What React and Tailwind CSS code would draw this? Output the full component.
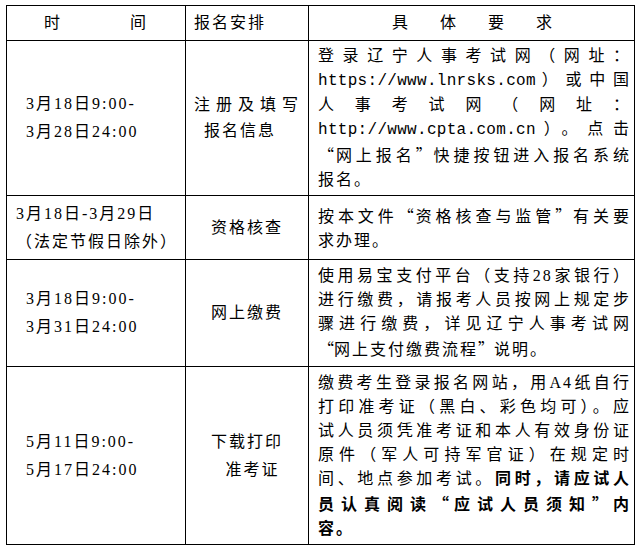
// Registration schedule table (时间 / 报名安排 / 具体要求)
const serif = "font-['Liberation_Serif','Noto_Sans_CJK_SC',serif]";

function Q({ close = false }) {
  return (
    <span
      className={
        "inline-block w-[16px] font-['Noto_Sans_CJK_SC',sans-serif] " +
        (close ? "text-left" : "text-right")
      }
    >
      {close ? "”" : "“"}
    </span>
  );
}

function Url({ children }) {
  return <span className="font-['Liberation_Mono',monospace] tracking-[0.3px]">{children}</span>;
}

// one justified line of the requirement column
function J({ children }) {
  return <div className="text-justify [text-align-last:justify]">{children}</div>;
}

function Cell({ children, className = "" }) {
  return <div className={"flex items-center bg-white " + className}>{children}</div>;
}

function TimeCell({ lines }) {
  return (
    <Cell className="pl-[19px]">
      <div className="leading-[28px]">
        {lines.map((l) => (
          <div key={l}>{l}</div>
        ))}
      </div>
    </Cell>
  );
}

function Req({ children }) {
  return (
    <Cell className="pl-[9px] pr-[3px]">
      <div className="w-full leading-[24px]">{children}</div>
    </Cell>
  );
}

export default function App() {
  return (
    <div className={"min-h-screen bg-white pl-[6px] pt-[5px] text-[16px] tracking-[2px] text-black " + serif}>
      <div className="grid w-[629px] grid-cols-[178px_122px_325px] grid-rows-[34px_154px_63px_106px_177px] gap-px bg-black p-px">
        {/* header */}
        <Cell className="gap-[68px] pl-[37px]">
          <span>时</span>
          <span>间</span>
        </Cell>
        <Cell className="pl-[8px]">报名安排</Cell>
        <Cell className="gap-[32px] pl-[83px] tracking-normal">
          <span>具</span>
          <span>体</span>
          <span>要</span>
          <span>求</span>
        </Cell>

        {/* row 1 */}
        <TimeCell lines={["3月18日9:00-", "3月28日24:00"]} />
        <Cell className="px-[8px]">
          <div className="w-full leading-[26px]">
            <J>注册及填写</J>
            <div className="pl-[10px]">报名信息</div>
          </div>
        </Cell>
        <Req>
          <J>登录辽宁人事考试网（网址：</J>
          <J>
            <Url>https://www.lnrsks.com</Url>）或中国
          </J>
          <J>人事考试网（网址：</J>
          <J>
            <Url>http://www.cpta.com.cn</Url>）。点击
          </J>
          <J>
            <Q />网上报名<Q close />快捷按钮进入报名系统
          </J>
          <div>报名。</div>
        </Req>

        {/* row 2 */}
        <Cell className="pl-[9px]">
          <div className="leading-[28px]">
            <div>3月18日-3月29日</div>
            <div>（法定节假日除外）</div>
          </div>
        </Cell>
        <Cell className="justify-center">资格核查</Cell>
        <Req>
          <J>
            按本文件<Q />资格核查与监管<Q close />有关要
          </J>
          <div>求办理。</div>
        </Req>

        {/* row 3 */}
        <TimeCell lines={["3月18日9:00-", "3月31日24:00"]} />
        <Cell className="justify-center">网上缴费</Cell>
        <Req>
          <J>使用易宝支付平台（支持28家银行）</J>
          <J>进行缴费，请报考人员按网上规定步</J>
          <J>骤进行缴费，详见辽宁人事考试网</J>
          <div>
            <Q />网上支付缴费流程<Q close />说明。
          </div>
        </Req>

        {/* row 4 */}
        <TimeCell lines={["5月11日9:00-", "5月17日24:00"]} />
        <Cell className="justify-center">
          <div className="text-center leading-[28px]">
            <div>下载打印</div>
            <div className="pl-[11px]">准考证</div>
          </div>
        </Cell>
        <Req>
          <J>缴费考生登录报名网站，用A4纸自行</J>
          <J>打印准考证（黑白、彩色均可）。应</J>
          <J>试人员须凭准考证和本人有效身份证</J>
          <J>原件（军人可持军官证）在规定时</J>
          <J>
            间、地点参加考试。<b className="font-bold">同时，请应试人</b>
          </J>
          <J>
            <b className="font-bold">
              员认真阅读<Q />应试人员须知<Q close />内
            </b>
          </J>
          <div className="font-bold">容。</div>
        </Req>
      </div>
    </div>
  );
}
